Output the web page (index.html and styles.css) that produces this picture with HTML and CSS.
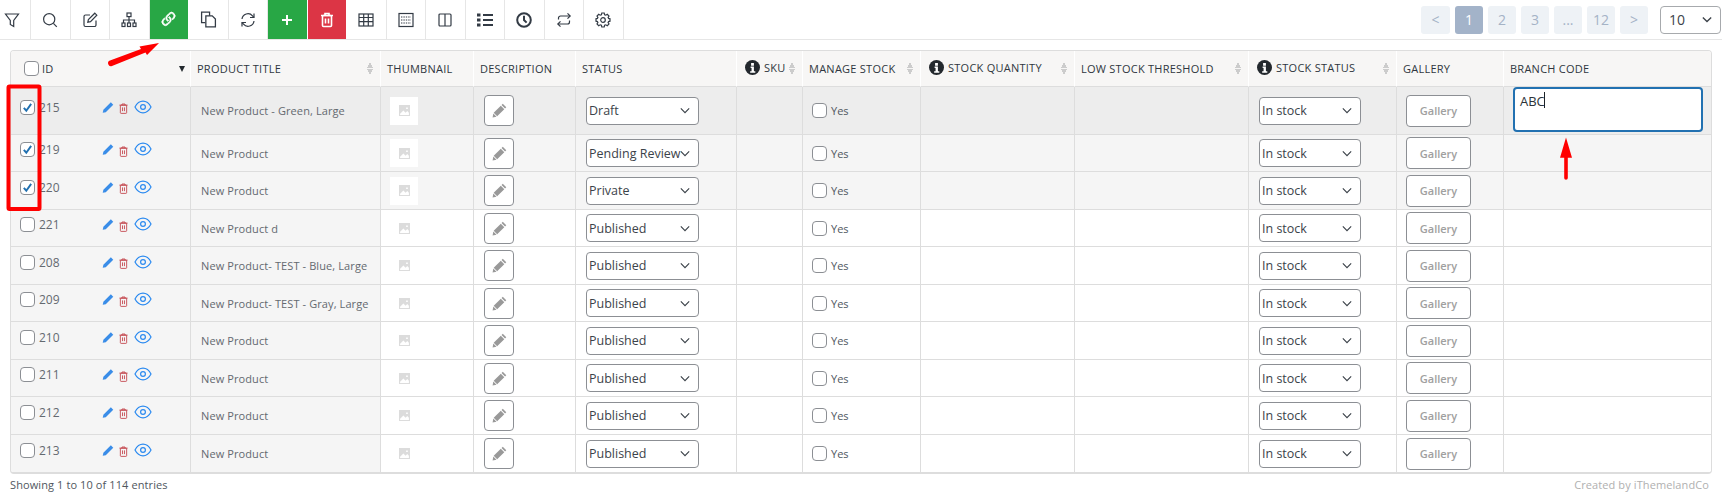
FILE: index.html
```html
<!DOCTYPE html>
<html lang="en">
<head>
<meta charset="utf-8">
<title>Products</title>
<link rel="stylesheet" href="styles.css">
</head>
<body>
<svg class="defs" width="0" height="0" aria-hidden="true">
  <symbol id="i-filter" viewBox="0 0 16 16"><path d="M1.500 2h13L9.700 8.500V14.500L6.300 12.500V8.500z"/></symbol>
  <symbol id="i-search" viewBox="0 0 16 16"><circle cx="7.200" cy="7.200" r="5.600"/><path d="M11.400 11.400l3.400 3.400"/></symbol>
  <symbol id="i-edit" viewBox="0 0 16 16"><path d="M14 8.500V13a1.500 1.500 0 0 1-1.500 1.500h-9A1.500 1.500 0 0 1 2 13V4.500A1.500 1.500 0 0 1 3.500 3H8"/><path d="M12.800 1.200l2 2L8.500 9.600l-2.700.6.6-2.700z"/></symbol>
  <symbol id="i-sitemap" viewBox="0 0 16 16"><rect x="6" y="1" width="4" height="3.600"/><path d="M8 4.600V11M2.500 11V8h11v3"/><rect x="1" y="11" width="3" height="3.500"/><rect x="6.500" y="11" width="3" height="3.500"/><rect x="12" y="11" width="3" height="3.500"/></symbol>
  <symbol id="i-link" viewBox="0 0 16 16"><path class="solid" d="M4.715 6.542 3.343 7.914a3 3 0 1 0 4.243 4.243l1.828-1.829A3 3 0 0 0 8.586 5.500L8 6.086a1.002 1.002 0 0 0-.154.199 2 2 0 0 1 .861 3.337L6.880 11.450a2 2 0 1 1-2.830-2.830l.793-.792a4.018 4.018 0 0 1-.128-1.287z"/><path class="solid" d="M6.586 4.672A3 3 0 0 0 7.414 9.500l.775-.776a2 2 0 0 1-.896-3.346L9.120 3.550a2 2 0 1 1 2.830 2.830l-.793.792c.112.420.155.855.128 1.287l1.372-1.372a3 3 0 1 0-4.243-4.243L6.586 4.672z"/></symbol>
  <symbol id="i-copy" viewBox="0 0 16 16"><path d="M5 11H1.500V1h7.500v3.500"/><path d="M5.500 4.500h6l3 3v7.500h-9z"/></symbol>
  <symbol id="i-refresh" viewBox="0 0 16 16"><path d="M2 7a6 6 0 0 1 10.500-3.200L14 5.500"/><path d="M14 1.500v4h-4"/><path d="M14 9a6 6 0 0 1-10.500 3.200L2 10.500"/><path d="M2 14.500v-4h4"/></symbol>
  <symbol id="i-plus" viewBox="0 0 16 16"><path d="M8 3v10M3 8h10"/></symbol>
  <symbol id="i-trash" viewBox="0 0 16 16"><path d="M2 3.500h12M6 3.500V1.500h4v2"/><rect x="3.500" y="3.500" width="9" height="11" rx="1"/><path d="M6.500 6.500v5M9.500 6.500v5"/></symbol>
  <symbol id="i-table" viewBox="0 0 16 16"><rect x="1" y="2" width="14" height="12"/><path d="M1 5.500h14M1 9.700h14M5.700 2v12M10.300 2v12"/></symbol>
  <symbol id="i-dots" viewBox="0 0 16 16"><rect x="1" y="1.500" width="14" height="13"/><path class="dash" d="M3 5h10M3 8h10M3 11h10"/></symbol>
  <symbol id="i-cols" viewBox="0 0 16 16"><rect x="2" y="2" width="12" height="12" rx="1"/><path d="M8 2v12"/></symbol>
  <symbol id="i-list" viewBox="0 0 16 16"><path class="solid" d="M0 1.500h3.500v3H0zM0 6.500h3.500v3H0zM0 11.500h3.500v3H0z"/><path class="thick" d="M6 3h10M6 8h10M6 13h10"/></symbol>
  <symbol id="i-clock" viewBox="0 0 16 16"><circle class="thick" cx="8" cy="8" r="6.800"/><path class="thick" d="M8 3.800V8l2.600 2.600"/></symbol>
  <symbol id="i-repeat" viewBox="0 0 16 16"><path d="M2.500 7.500V6a2 2 0 0 1 2-2H14"/><path d="M11.500 1.300L14.200 4l-2.700 2.700"/><path d="M13.500 8.500V10a2 2 0 0 1-2 2H2"/><path d="M4.500 9.300L1.800 12l2.700 2.700"/></symbol>
  <symbol id="i-gear" viewBox="0 0 16 16"><path d="M6.800 1h2.400l.4 1.700 1.200.5 1.500-.9 1.700 1.700-.9 1.500.5.9 1.400.4v2.400l-1.400.4-.5.9.9 1.500-1.700 1.700-1.500-.9-1.200.5-.4 1.700H6.800l-.4-1.700-1.200-.5-1.500.9-1.700-1.700.9-1.500-.5-.9-1.400-.4V6.800l1.400-.4.5-.9-.9-1.500 1.700-1.700 1.500.9 1.200-.5z"/><circle cx="8" cy="8" r="2.300"/></symbol>
  <symbol id="i-pen" viewBox="0 0 16 16"><path class="solid" d="M11.800 1l3.200 3.200L5 14.200 1 15l.8-4z"/></symbol>
  <symbol id="i-pencil" viewBox="0 0 16 16"><path class="solid" d="M11.500.8l3.700 3.700-1.300 1.300-3.700-3.700zM9.400 2.900l3.700 3.700-7.600 7.600-3.700-3.700zM1.400 11.200l3.400 3.400L.6 15.400z"/></symbol>
  <symbol id="i-bin" viewBox="0 0 12 14"><path d="M.5 2.500h11M4 2.500V1h4v1.500"/><rect x="1.800" y="2.500" width="8.400" height="11" rx="1"/><path d="M4.700 5.500v5M7.300 5.500v5"/></symbol>
  <symbol id="i-eye" viewBox="0 0 18 14"><path d="M1 7s3-5.800 8-5.800S17 7 17 7s-3 5.800-8 5.800S1 7 1 7z"/><circle cx="9" cy="7" r="2.400"/></symbol>
  <symbol id="i-img" viewBox="0 0 10 10"><path class="solid" d="M0 0h10v10H0z"/><path class="cut" d="M1 8l3-3 2 2 1.500-1.500L9 7v2H1zM6.500 2.200h1.500v1.500H6.500z"/></symbol>
  <symbol id="i-info" viewBox="0 0 16 16"><circle class="solid" cx="8" cy="8" r="8"/><path class="cut" d="M6.500 3.200h3V6h-3zM6 7h3.500v5H11v1.500H5.500V12H7V8.500H6z"/></symbol>
</svg>

<div class="page">
  <header class="toolbar">
    <button class="tool tool-first"><svg class="ico"><use href="#i-filter"/></svg></button>
    <button class="tool"><svg class="ico"><use href="#i-search"/></svg></button>
    <button class="tool"><svg class="ico"><use href="#i-edit"/></svg></button>
    <button class="tool"><svg class="ico"><use href="#i-sitemap"/></svg></button>
    <button class="tool tool-green"><svg class="ico ico-link"><use href="#i-link"/></svg></button>
    <button class="tool"><svg class="ico ico-copy"><use href="#i-copy"/></svg></button>
    <button class="tool"><svg class="ico"><use href="#i-refresh"/></svg></button>
    <button class="tool tool-green"><svg class="ico"><use href="#i-plus"/></svg></button>
    <button class="tool tool-red"><svg class="ico"><use href="#i-trash"/></svg></button>
    <button class="tool"><svg class="ico"><use href="#i-table"/></svg></button>
    <button class="tool"><svg class="ico"><use href="#i-dots"/></svg></button>
    <button class="tool"><svg class="ico"><use href="#i-cols"/></svg></button>
    <button class="tool"><svg class="ico"><use href="#i-list"/></svg></button>
    <button class="tool"><svg class="ico"><use href="#i-clock"/></svg></button>
    <button class="tool"><svg class="ico"><use href="#i-repeat"/></svg></button>
    <button class="tool"><svg class="ico"><use href="#i-gear"/></svg></button>
    <nav class="pager">
      <span class="pg pg-wide">&lt;</span><span class="pg pg-on">1</span><span class="pg">2</span><span class="pg">3</span><span class="pg">...</span><span class="pg">12</span><span class="pg">&gt;</span>
      <select class="per"><option>10</option></select>
    </nav>
  </header>

  <div class="wrap">
    <table class="grid">
      <colgroup>
        <col class="c1"><col class="c2"><col class="c3"><col class="c4"><col class="c5"><col class="c6"><col class="c7"><col class="c8"><col class="c9"><col class="c10"><col class="c11"><col class="c12">
      </colgroup>
      <thead>
        <tr>
          <th class="th-id"><div class="h"><input type="checkbox" class="cb"><span class="h-id">ID</span><span class="drop"></span></div></th>
          <th><div class="h"><span>Product Title</span><span class="sort"></span></div></th>
          <th><div class="h"><span>Thumbnail</span></div></th>
          <th><div class="h"><span>Description</span></div></th>
          <th><div class="h"><span>Status</span></div></th>
          <th><div class="h"><svg class="info"><use href="#i-info"/></svg><span class="up">SKU</span><span class="sort"></span></div></th>
          <th><div class="h"><span>Manage Stock</span><span class="sort"></span></div></th>
          <th><div class="h"><svg class="info"><use href="#i-info"/></svg><span class="up">Stock Quantity</span><span class="sort"></span></div></th>
          <th><div class="h"><span>Low Stock Threshold</span><span class="sort"></span></div></th>
          <th><div class="h"><svg class="info"><use href="#i-info"/></svg><span class="up">Stock Status</span><span class="sort"></span></div></th>
          <th><div class="h"><span>Gallery</span></div></th>
          <th><div class="h"><span>Branch Code</span></div></th>
        </tr>
      </thead>
      <tbody>
        <tr class="active">
          <td class="side"><div class="idc"><input type="checkbox" class="cb" checked><span class="num">215</span><span class="acts"><svg class="a-pen"><use href="#i-pen"/></svg><svg class="a-bin"><use href="#i-bin"/></svg><svg class="a-eye"><use href="#i-eye"/></svg></span></div></td>
          <td class="side title">New Product - Green, Large</td>
          <td class="mid"><span class="thumb"><svg class="t-img"><use href="#i-img"/></svg></span></td>
          <td class="mid"><button class="pencil"><svg class="p-ico"><use href="#i-pencil"/></svg></button></td>
          <td class="sel"><select class="dd"><option>Draft</option></select></td>
          <td></td>
          <td class="yes"><label class="y"><input type="checkbox" class="cb">Yes</label></td>
          <td></td>
          <td></td>
          <td class="sel"><select class="dd dd-s"><option>In stock</option></select></td>
          <td class="mid"><button class="gal">Gallery</button></td>
          <td class="code"><textarea class="ta">ABC</textarea></td>
        </tr>
        <tr class="picked">
          <td class="side"><div class="idc"><input type="checkbox" class="cb" checked><span class="num">219</span><span class="acts"><svg class="a-pen"><use href="#i-pen"/></svg><svg class="a-bin"><use href="#i-bin"/></svg><svg class="a-eye"><use href="#i-eye"/></svg></span></div></td>
          <td class="side title">New Product</td>
          <td class="mid"><span class="thumb"><svg class="t-img"><use href="#i-img"/></svg></span></td>
          <td class="mid"><button class="pencil"><svg class="p-ico"><use href="#i-pencil"/></svg></button></td>
          <td class="sel"><select class="dd"><option>Pending Review</option></select></td>
          <td></td>
          <td class="yes"><label class="y"><input type="checkbox" class="cb">Yes</label></td>
          <td></td>
          <td></td>
          <td class="sel"><select class="dd dd-s"><option>In stock</option></select></td>
          <td class="mid"><button class="gal">Gallery</button></td>
          <td></td>
        </tr>
        <tr class="picked">
          <td class="side"><div class="idc"><input type="checkbox" class="cb" checked><span class="num">220</span><span class="acts"><svg class="a-pen"><use href="#i-pen"/></svg><svg class="a-bin"><use href="#i-bin"/></svg><svg class="a-eye"><use href="#i-eye"/></svg></span></div></td>
          <td class="side title">New Product</td>
          <td class="mid"><span class="thumb"><svg class="t-img"><use href="#i-img"/></svg></span></td>
          <td class="mid"><button class="pencil"><svg class="p-ico"><use href="#i-pencil"/></svg></button></td>
          <td class="sel"><select class="dd"><option>Private</option></select></td>
          <td></td>
          <td class="yes"><label class="y"><input type="checkbox" class="cb">Yes</label></td>
          <td></td>
          <td></td>
          <td class="sel"><select class="dd dd-s"><option>In stock</option></select></td>
          <td class="mid"><button class="gal">Gallery</button></td>
          <td></td>
        </tr>
        <tr>
          <td class="side"><div class="idc"><input type="checkbox" class="cb"><span class="num">221</span><span class="acts"><svg class="a-pen"><use href="#i-pen"/></svg><svg class="a-bin"><use href="#i-bin"/></svg><svg class="a-eye"><use href="#i-eye"/></svg></span></div></td>
          <td class="side title">New Product d</td>
          <td class="mid"><span class="thumb"><svg class="t-img"><use href="#i-img"/></svg></span></td>
          <td class="mid"><button class="pencil"><svg class="p-ico"><use href="#i-pencil"/></svg></button></td>
          <td class="sel"><select class="dd"><option>Published</option></select></td>
          <td></td>
          <td class="yes"><label class="y"><input type="checkbox" class="cb">Yes</label></td>
          <td></td>
          <td></td>
          <td class="sel"><select class="dd dd-s"><option>In stock</option></select></td>
          <td class="mid"><button class="gal">Gallery</button></td>
          <td></td>
        </tr>
        <tr>
          <td class="side"><div class="idc"><input type="checkbox" class="cb"><span class="num">208</span><span class="acts"><svg class="a-pen"><use href="#i-pen"/></svg><svg class="a-bin"><use href="#i-bin"/></svg><svg class="a-eye"><use href="#i-eye"/></svg></span></div></td>
          <td class="side title">New Product- TEST - Blue, Large</td>
          <td class="mid"><span class="thumb"><svg class="t-img"><use href="#i-img"/></svg></span></td>
          <td class="mid"><button class="pencil"><svg class="p-ico"><use href="#i-pencil"/></svg></button></td>
          <td class="sel"><select class="dd"><option>Published</option></select></td>
          <td></td>
          <td class="yes"><label class="y"><input type="checkbox" class="cb">Yes</label></td>
          <td></td>
          <td></td>
          <td class="sel"><select class="dd dd-s"><option>In stock</option></select></td>
          <td class="mid"><button class="gal">Gallery</button></td>
          <td></td>
        </tr>
        <tr>
          <td class="side"><div class="idc"><input type="checkbox" class="cb"><span class="num">209</span><span class="acts"><svg class="a-pen"><use href="#i-pen"/></svg><svg class="a-bin"><use href="#i-bin"/></svg><svg class="a-eye"><use href="#i-eye"/></svg></span></div></td>
          <td class="side title">New Product- TEST - Gray, Large</td>
          <td class="mid"><span class="thumb"><svg class="t-img"><use href="#i-img"/></svg></span></td>
          <td class="mid"><button class="pencil"><svg class="p-ico"><use href="#i-pencil"/></svg></button></td>
          <td class="sel"><select class="dd"><option>Published</option></select></td>
          <td></td>
          <td class="yes"><label class="y"><input type="checkbox" class="cb">Yes</label></td>
          <td></td>
          <td></td>
          <td class="sel"><select class="dd dd-s"><option>In stock</option></select></td>
          <td class="mid"><button class="gal">Gallery</button></td>
          <td></td>
        </tr>
        <tr>
          <td class="side"><div class="idc"><input type="checkbox" class="cb"><span class="num">210</span><span class="acts"><svg class="a-pen"><use href="#i-pen"/></svg><svg class="a-bin"><use href="#i-bin"/></svg><svg class="a-eye"><use href="#i-eye"/></svg></span></div></td>
          <td class="side title">New Product</td>
          <td class="mid"><span class="thumb"><svg class="t-img"><use href="#i-img"/></svg></span></td>
          <td class="mid"><button class="pencil"><svg class="p-ico"><use href="#i-pencil"/></svg></button></td>
          <td class="sel"><select class="dd"><option>Published</option></select></td>
          <td></td>
          <td class="yes"><label class="y"><input type="checkbox" class="cb">Yes</label></td>
          <td></td>
          <td></td>
          <td class="sel"><select class="dd dd-s"><option>In stock</option></select></td>
          <td class="mid"><button class="gal">Gallery</button></td>
          <td></td>
        </tr>
        <tr>
          <td class="side"><div class="idc"><input type="checkbox" class="cb"><span class="num">211</span><span class="acts"><svg class="a-pen"><use href="#i-pen"/></svg><svg class="a-bin"><use href="#i-bin"/></svg><svg class="a-eye"><use href="#i-eye"/></svg></span></div></td>
          <td class="side title">New Product</td>
          <td class="mid"><span class="thumb"><svg class="t-img"><use href="#i-img"/></svg></span></td>
          <td class="mid"><button class="pencil"><svg class="p-ico"><use href="#i-pencil"/></svg></button></td>
          <td class="sel"><select class="dd"><option>Published</option></select></td>
          <td></td>
          <td class="yes"><label class="y"><input type="checkbox" class="cb">Yes</label></td>
          <td></td>
          <td></td>
          <td class="sel"><select class="dd dd-s"><option>In stock</option></select></td>
          <td class="mid"><button class="gal">Gallery</button></td>
          <td></td>
        </tr>
        <tr>
          <td class="side"><div class="idc"><input type="checkbox" class="cb"><span class="num">212</span><span class="acts"><svg class="a-pen"><use href="#i-pen"/></svg><svg class="a-bin"><use href="#i-bin"/></svg><svg class="a-eye"><use href="#i-eye"/></svg></span></div></td>
          <td class="side title">New Product</td>
          <td class="mid"><span class="thumb"><svg class="t-img"><use href="#i-img"/></svg></span></td>
          <td class="mid"><button class="pencil"><svg class="p-ico"><use href="#i-pencil"/></svg></button></td>
          <td class="sel"><select class="dd"><option>Published</option></select></td>
          <td></td>
          <td class="yes"><label class="y"><input type="checkbox" class="cb">Yes</label></td>
          <td></td>
          <td></td>
          <td class="sel"><select class="dd dd-s"><option>In stock</option></select></td>
          <td class="mid"><button class="gal">Gallery</button></td>
          <td></td>
        </tr>
        <tr>
          <td class="side"><div class="idc"><input type="checkbox" class="cb"><span class="num">213</span><span class="acts"><svg class="a-pen"><use href="#i-pen"/></svg><svg class="a-bin"><use href="#i-bin"/></svg><svg class="a-eye"><use href="#i-eye"/></svg></span></div></td>
          <td class="side title">New Product</td>
          <td class="mid"><span class="thumb"><svg class="t-img"><use href="#i-img"/></svg></span></td>
          <td class="mid"><button class="pencil"><svg class="p-ico"><use href="#i-pencil"/></svg></button></td>
          <td class="sel"><select class="dd"><option>Published</option></select></td>
          <td></td>
          <td class="yes"><label class="y"><input type="checkbox" class="cb">Yes</label></td>
          <td></td>
          <td></td>
          <td class="sel"><select class="dd dd-s"><option>In stock</option></select></td>
          <td class="mid"><button class="gal">Gallery</button></td>
          <td></td>
        </tr>
      </tbody>
    </table>
  </div>

  <footer class="foot">
    <span>Showing 1 to 10 of 114 entries</span>
    <span class="credit">Created by iThemelandCo</span>
  </footer>

  <svg class="marks" viewBox="0 0 1722 499" aria-hidden="true">
    <rect class="mark-box" x="8.500" y="86.500" width="31" height="122.500" rx="1"/>
    <path class="mark-arrow" d="M110 60.500L141 49l-1.500-2.500L159 43 147 55l-1.500-2.500L112 66a2.900 2.900 0 0 1-2-5.500z"/>
    <path class="mark-arrow" d="M1566 137.500l6 20.200h-4.200V178a1.800 1.800 0 0 1-3.600 0V157.700H1560z"/>
    <path class="mark-caret" d="M1544.500 92v16"/>
  </svg>
</div>
</body>
</html>
```
FILE: styles.css
```css
* { box-sizing: border-box; }

html, body { margin: 0; padding: 0; background: #fff; }

body {
  font-family: "Open Sans", "Liberation Sans", sans-serif;
  font-size: 11px;
  color: #50575e;
}

.defs { position: absolute; }

.page { position: relative; width: 1722px; height: 499px; overflow: hidden; }

/* symbols: stroke weight comes from the button that uses them */
symbol path, symbol circle, symbol rect {
  fill: none;
  stroke: currentColor;
  stroke-width: var(--sw, 1.2);
}
symbol .solid { fill: currentColor; stroke: var(--solid-stroke, none); stroke-width: .6; }
symbol .cut { fill: #fff; stroke: none; }
symbol .thick { stroke-width: 2; }
symbol .dash { stroke-dasharray: 1.4 1; }

/* toolbar */
.toolbar {
  display: flex;
  align-items: stretch;
  height: 40px;
  border-bottom: 1px solid #e6e6e6;
}
.tool {
  flex: none;
  width: 39.5px;
  height: 39px;
  padding: 0;
  display: flex;
  align-items: center;
  justify-content: center;
  background: #fff;
  border: 0;
  border-right: 1px solid #e6e6e6;
  color: #333b45;
}
.tool-first { width: 31px; padding-right: 7px; }
.tool-green { background: #28a745; color: #fff; border-right-color: #fff; --sw: 2; --solid-stroke: #fff; }
.tool-red { background: #dc3545; color: #fff; border-right-color: #fff; --sw: 1.6; }
.ico { width: 16px; height: 16px; }
.ico-link { width: 19px; height: 19px; }
.ico-copy { width: 17px; height: 17px; }

.pager {
  margin-left: auto;
  display: flex;
  align-items: center;
  gap: 5px;
  padding-right: 1px;
  height: 39px;
}
.pg {
  width: 28px;
  height: 28px;
  border-radius: 3px;
  display: flex;
  align-items: center;
  justify-content: center;
  background: #eef2f6;
  color: #a5b3c6;
  font-size: 14px;
}
.pg-wide { width: 29px; }
.pg-on { background: #a3b3c9; color: #fff; }
.per {
  appearance: none;
  width: 61px;
  height: 28px;
  margin-left: 7px;
  padding: 0 0 0 8px;
  font: 14px "Open Sans", sans-serif;
  color: #3c434a;
  background: #fff url("data:image/svg+xml,%3Csvg xmlns='http://www.w3.org/2000/svg' viewBox='0 0 12 8'%3E%3Cpath d='M1 1.500l5 5 5-5' fill='none' stroke='%233c434a' stroke-width='1.600'/%3E%3C/svg%3E") no-repeat right 8px center / 10px 7px;
  border: 1px solid #a7aaad;
  border-radius: 4px;
}

/* table */
.wrap {
  width: 1702px;
  margin: 10px 0 0 10px;
  border: 1px solid #ddd;
  border-bottom-width: 2px;
  border-radius: 4px;
  overflow: hidden;
}
.grid {
  width: 1700px;
  table-layout: fixed;
  border-collapse: separate;
  border-spacing: 0;
}
.c1 { width: 180px; } .c2 { width: 190px; } .c3 { width: 93px; } .c4 { width: 102px; }
.c5 { width: 161px; } .c6 { width: 66px; } .c7 { width: 118px; } .c8 { width: 154px; }
.c9 { width: 174px; } .c10 { width: 148px; } .c11 { width: 107px; } .c12 { width: 207px; }

th {
  height: 36px;
  padding: 0 7px 0 6px;
  background: #f7f6f5;
  border-right: 1px solid #fff;
  border-bottom: 1px solid #ddd;
  text-align: left;
  font-size: 11px;
  font-weight: 500;
  color: #2f3640;
  text-transform: uppercase;
  letter-spacing: .25px;
  white-space: nowrap;
}
th:last-child { border-right: 0; }
.th-id { padding-left: 13px; padding-right: 5px; }
.h { display: flex; align-items: center; }
.h-id { margin-left: 3px; }
.up { margin-top: -3px; }
.info { width: 15px; height: 15px; margin: -2px 4px 0 2px; color: #23282d; flex: none; }
.sort {
  margin-left: auto;
  flex: none;
  width: 6px;
  height: 13px;
  background:
    linear-gradient(to top left, #ccc 50%, transparent 50%) left top / 3px 6px no-repeat,
    linear-gradient(to top right, #ccc 50%, transparent 50%) right top / 3px 6px no-repeat,
    linear-gradient(to bottom left, #ccc 50%, transparent 50%) left bottom / 3px 6px no-repeat,
    linear-gradient(to bottom right, #ccc 50%, transparent 50%) right bottom / 3px 6px no-repeat;
}
.drop {
  margin-left: auto;
  width: 0;
  height: 0;
  border-left: 3.500px solid transparent;
  border-right: 3.500px solid transparent;
  border-top: 6px solid #23282d;
}

td {
  height: 37px;
  padding: 0;
  background: #fff;
  border-right: 1px solid #ddd;
  border-bottom: 1px solid #ddd;
  vertical-align: middle;
}
td:last-child { border-right: 0; }
tbody tr:nth-child(odd) td { height: 38px; }
tbody tr:first-child td { height: 48px; }
tbody tr:last-child td { height: 37px; border-bottom: 0; }
td.side { background: #f5f5f5; }
.picked td { background: #f5f5f5; }
.active td { background: #ededed; }

.cb {
  appearance: none;
  flex: none;
  width: 15px;
  height: 15px;
  margin: 0;
  background: #fff;
  border: 1px solid #8c8f94;
  border-radius: 4px;
}
.cb:checked {
  background: #fff url("data:image/svg+xml,%3Csvg xmlns='http://www.w3.org/2000/svg' viewBox='0 0 16 16'%3E%3Cpath d='M3.500 8.500l3 3.500 6-8.500' fill='none' stroke='%232271b1' stroke-width='2.400'/%3E%3C/svg%3E") center / 13px 13px no-repeat;
}

.idc { display: flex; align-items: center; padding: 0 0 7px 9px; }
.num { margin-left: 4px; font-size: 12px; color: #646970; width: 63px; flex: none; }
.acts { display: flex; align-items: center; }
.a-pen { width: 12px; height: 13px; color: #3a8de8; }
.a-bin { width: 9px; height: 11px; margin: 3px 0 0 5px; color: #c4474f; }
.a-eye { width: 18px; height: 14px; margin: -1px 0 0 6px; color: #2b8af0; }

.title { padding-left: 10px; color: #646970; font-size: 11px; letter-spacing: .1px; white-space: nowrap; }
.mid { padding-left: 9px; }
.thumb { display: inline-flex; align-items: center; justify-content: center; width: 28px; height: 28px; background: #fff; vertical-align: middle; }
.t-img { width: 11px; height: 11px; color: #dcdcdc; }

.pencil {
  display: inline-flex;
  align-items: center;
  justify-content: center;
  width: 30px;
  height: 31px;
  margin-left: 1px;
  padding: 0;
  background: #fff;
  border: 1px solid #8c8f94;
  border-radius: 4px;
  color: #999;
  vertical-align: middle;
}
.p-ico { width: 15px; height: 15px; }

.sel { padding-left: 10px; }
.dd {
  appearance: none;
  display: block;
  width: 113px;
  height: 28px;
  padding: 0 8px 0 2px;
  font: 12.5px "Open Sans", sans-serif;
  color: #3c434a;
  background: #fff url("data:image/svg+xml,%3Csvg xmlns='http://www.w3.org/2000/svg' viewBox='0 0 12 8'%3E%3Cpath d='M1 1.500l5 5 5-5' fill='none' stroke='%233c434a' stroke-width='1.400'/%3E%3C/svg%3E") no-repeat right 8px center / 10px 7px;
  border: 1px solid #8c8f94;
  border-radius: 4px;
}
.dd-s { width: 102px; }

.yes { padding-left: 9px; }
.y { display: flex; align-items: center; gap: 4px; font-size: 11px; color: #50575e; }

.gal {
  width: 65px;
  height: 32px;
  padding: 0;
  background: #fff;
  border: 1px solid #8c8f94;
  border-radius: 4px;
  font: 600 11px "Open Sans", sans-serif;
  color: #a0a0a0;
  vertical-align: middle;
}

.code { padding: 0 8px 0 9px; vertical-align: top; }
.ta {
  display: block;
  width: 190px;
  height: 45px;
  margin: 0;
  padding: 3px 5px;
  resize: none;
  font: 13px "Open Sans", sans-serif;
  color: #2c3338;
  background: #fff;
  border: 2px solid #2271b1;
  border-radius: 4px;
  outline: 0;
}

/* footer */
.foot {
  display: flex;
  justify-content: space-between;
  padding: 3px 13px 0 10px;
  font-size: 11px;
  letter-spacing: .1px;
  color: #50575e;
}
.credit { color: #b0b0b0; }

/* annotations over the screenshot */
.marks { position: absolute; left: 0; top: 0; width: 1722px; height: 499px; pointer-events: none; }
.mark-box { fill: none; stroke: #f00; stroke-width: 4; }
.mark-arrow { fill: #f00; }
.mark-caret { stroke: #1d2327; stroke-width: 1; }
```
